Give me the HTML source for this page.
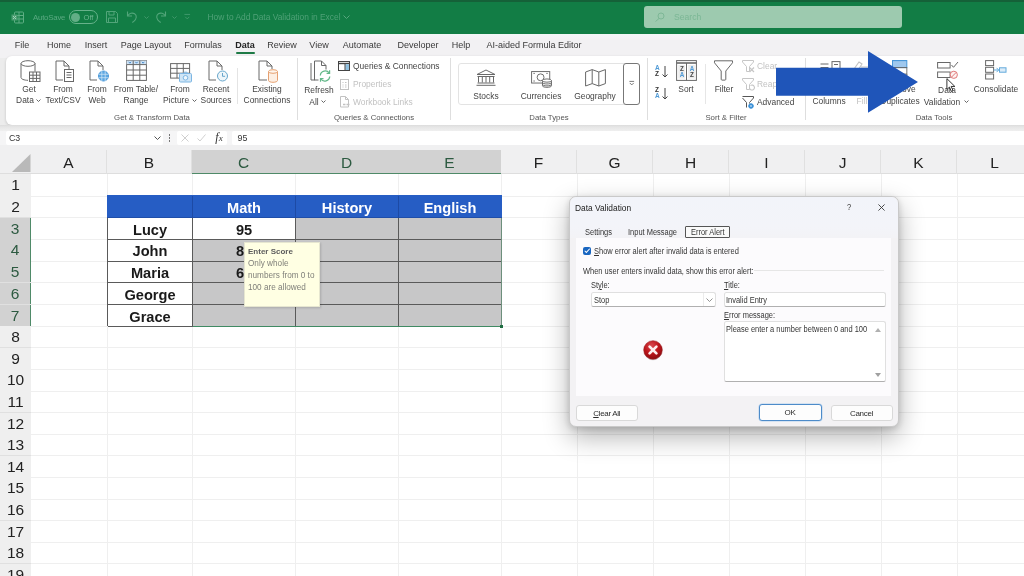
<!DOCTYPE html>
<html><head><meta charset="utf-8"><title>How to Add Data Validation in Excel</title>
<style>
*{box-sizing:border-box;margin:0;padding:0}
html,body{width:1024px;height:576px;overflow:hidden;background:#fff}
body{position:relative;font-family:"Liberation Sans",sans-serif;color:#333;font-size:9px}
.abs{position:absolute}
.t{position:absolute;white-space:nowrap;text-align:center;line-height:1}
#titlebar{left:0;top:0;width:1024px;height:33.5px;background:#127d45}
#titlebar .topline{left:0;top:0;width:1024px;height:1.5px;background:#156138}
#tabs{left:0;top:33.5px;width:1024px;height:24px;background:linear-gradient(#f1f6f5 0,#f4f2f7 3px,#f2f1f3 5px)}
#ribbonbg{left:0;top:58px;width:1024px;height:93px;background:#ececec}
#ribbon{left:5.5px;top:55.5px;width:1030px;height:69px;background:#fff;border-radius:6px;box-shadow:0 1px 3px rgba(0,0,0,.18)}
.tab{font-size:9px;color:#3a3a3a;top:40.5px}
.lbl{font-size:9px;color:#444;transform:scaleX(.935);transform-origin:50% 50%}
.lbl[style*="text-align:left"]{transform-origin:0 50%}
.dis{color:#c2c2c2}
.grp{font-size:7.8px;color:#555;top:114px}
.sep{position:absolute;width:1px;background:#dedede;top:58px;height:62px}
#fbar{left:0;top:124.5px;width:1024px;height:21px;background:linear-gradient(#dcdcdc 0,#e6e6e6 2px,#efefef 6px,#f0f0f1 7px)}
#grid{left:0;top:150px;width:1024px;height:426px;background:#fff}
.ch{position:absolute;font-size:15.5px;color:#222;text-align:center;line-height:25px;background:#efefef}
.rh{position:absolute;left:0;width:31px;height:22px;font-size:15.5px;color:#222;text-align:center;line-height:22px;background:#efefef}
.vl{position:absolute;width:1px;background:#efefef;height:403px}
.hl{position:absolute;height:1px;background:#efefef;left:31px;width:993px}
.cell{position:absolute;font-weight:bold;font-size:14.6px;text-align:center;color:#1a1a1a;white-space:nowrap}
svg{position:absolute;overflow:visible}
</style></head><body>
<div id="titlebar" class="abs"><div class="topline abs"></div></div>
<div id="tabs" class="abs"></div>
<div id="ribbonbg" class="abs"></div>
<div id="ribbon" class="abs"></div>
<div id="fbar" class="abs"></div>
<div id="grid" class="abs"></div>
<div id="gl" class="abs" style="left:0;top:0;width:1024px;height:576px;will-change:transform">
<!-- title bar contents -->
<svg style="left:11px;top:11px" width="13" height="13" viewBox="0 0 13 13" fill="none" stroke="#5fae84" stroke-width="1">
<rect x="3.5" y="1" width="9" height="11" rx="1"/><path d="M3.5 4.5h9M3.5 8h9M8 1v11"/><rect x="0.5" y="3.5" width="6" height="6" fill="#4c9f73" stroke="none"/><path d="M2 5l3 3M5 5l-3 3" stroke="#9fd0b5"/></svg>
<div class="t" style="left:33px;top:13.700px;width:32px;font-size:7.800px;letter-spacing:-0.200px;color:#5aa981">AutoSave</div>
<div class="abs" style="left:69px;top:10px;width:29px;height:14px;border:1px solid #67b28b;border-radius:7px"></div>
<div class="abs" style="left:71px;top:12.5px;width:9px;height:9px;border-radius:50%;background:#62ae86"></div>
<div class="t" style="left:82px;top:13.5px;width:13px;font-size:7.5px;color:#6cb58f">Off</div>
<svg style="left:106px;top:11px" width="12" height="12" viewBox="0 0 12 12" fill="none" stroke="#52a57a" stroke-width="1"><path d="M0.5 0.5h9l2 2v9h-11z"/><path d="M3 0.5v3.5h5v-3.5M2.5 11.500v-4.500h7v4.500"/></svg>
<svg style="left:126px;top:10px" width="13" height="13" viewBox="0 0 13 13" fill="none" stroke="#52a57a" stroke-width="1.1"><path d="M1.500 1.500v4.500h4.500"/><path d="M1.800 5.800c1.500-2.500 4.500-3.500 6.800-2 2.500 1.700 2.200 5-0.800 7.500l-1.500 1.200"/></svg>
<svg style="left:143.500px;top:15.500px" width="5" height="3.300" viewBox="0 0 6 4" fill="none" stroke="#459b6f" stroke-width="1.100"><path d="M0.500 0.500l2.500 2.500 2.500-2.500"/></svg>
<svg style="left:154px;top:10px" width="13" height="13" viewBox="0 0 13 13" fill="none" stroke="#52a57a" stroke-width="1.1"><path d="M11.500 1.500v4.500h-4.500"/><path d="M11.200 5.800c-1.500-2.500-4.500-3.500-6.800-2-2.500 1.700-2.200 5 0.800 7.500l1.500 1.200"/></svg>
<svg style="left:171.500px;top:15.500px" width="5" height="3.300" viewBox="0 0 6 4" fill="none" stroke="#459b6f" stroke-width="1.100"><path d="M0.500 0.500l2.500 2.500 2.500-2.500"/></svg>
<svg style="left:184px;top:14px" width="6.500" height="5.700" viewBox="0 0 8 7" fill="none" stroke="#459b6f" stroke-width="1.100"><path d="M0.500 0.500h7M1.500 3.500l2.500 2.500 2.500-2.500"/></svg>
<div class="t" style="left:206.500px;top:13.200px;width:135px;font-size:8.400px;color:#4fa177">How to Add Data Validation in Excel</div>
<svg style="left:343px;top:15px" width="7" height="5" viewBox="0 0 7 5" fill="none" stroke="#57a67d" stroke-width="1"><path d="M0.500 0.500l3 3 3-3"/></svg>
<div class="abs" style="left:644px;top:6px;width:258px;height:22px;border-radius:3px;background:#9dcaaf"></div>
<svg style="left:655px;top:12px" width="10" height="10" viewBox="0 0 10 10" fill="none" stroke="#7db796" stroke-width="1"><circle cx="6" cy="4" r="3"/><path d="M4 6.500l-3.500 3"/></svg>
<div class="t" style="left:674px;top:12.500px;width:27px;font-size:8.6px;color:#7bb795;text-align:left">Search</div>
<!-- tabs -->
<div class="t tab" style="left:2px;width:40px">File</div>
<div class="t tab" style="left:39px;width:40px">Home</div>
<div class="t tab" style="left:76px;width:40px">Insert</div>
<div class="t tab" style="left:116px;width:60px">Page Layout</div>
<div class="t tab" style="left:173px;width:60px">Formulas</div>
<div class="t tab" style="left:225px;width:40px;font-weight:bold;color:#222">Data</div>
<div class="abs" style="left:236px;top:51.500px;width:19px;height:2px;background:#1e7a46;border-radius:1px"></div>
<div class="t tab" style="left:252px;width:60px">Review</div>
<div class="t tab" style="left:299px;width:40px">View</div>
<div class="t tab" style="left:332px;width:60px">Automate</div>
<div class="t tab" style="left:388px;width:60px">Developer</div>
<div class="t tab" style="left:441px;width:40px">Help</div>
<div class="t tab" style="left:474px;width:120px">AI-aided Formula Editor</div>
<!-- ribbon: Get & Transform -->
<svg style="left:20px;top:60px" width="21" height="23" viewBox="0 0 21 23" fill="none" stroke="#686868" stroke-width="1">
<ellipse cx="8" cy="3.500" rx="7" ry="2.800"/><path d="M1 3.500v14c0 1.500 3 2.800 7 2.800M15 3.500v8"/>
<rect x="9.500" y="12" width="10.500" height="9.500" fill="#fff"/><path d="M9.500 15.200h10.500M9.500 18.400h10.500M13 12v9.500M16.500 12v9.500"/></svg>
<div class="t lbl" style="left:9px;top:85px;width:40px">Get</div>
<div class="t lbl" style="left:5px;top:96px;width:40px">Data</div>
<svg style="left:36px;top:99px" width="5" height="4" viewBox="0 0 5 4" fill="none" stroke="#555" stroke-width="0.900"><path d="M0.500 0.500l2 2 2-2"/></svg>

<svg style="left:55px;top:60px" width="21" height="23" viewBox="0 0 21 23" fill="none" stroke="#686868" stroke-width="1">
<path d="M1 1h8l5 5v5M1 1v19h7"/><path d="M9 1v5h5"/><rect x="9.500" y="9.500" width="9" height="12" fill="#fff"/><path d="M11.500 12.500h5M11.500 15h5M11.500 17.500h5"/></svg>
<div class="t lbl" style="left:43px;top:85px;width:40px">From</div>
<div class="t lbl" style="left:38px;top:96px;width:50px">Text/CSV</div>

<svg style="left:89px;top:60px" width="21" height="23" viewBox="0 0 21 23" fill="none" stroke="#686868" stroke-width="1">
<path d="M1 1h8l5 5v4M1 1v19h7"/><path d="M9 1v5h5"/><circle cx="14.500" cy="16" r="5" fill="#5ea8e2" stroke="#4a98d8"/><path d="M9.500 14.300h10M9.500 17.700h10M12.800 11v10M16.200 11v10" stroke="#d6e9f8" stroke-width="0.700"/></svg>
<div class="t lbl" style="left:77px;top:85px;width:40px">From</div>
<div class="t lbl" style="left:77px;top:96px;width:40px">Web</div>

<svg style="left:126px;top:60px" width="21" height="21" viewBox="0 0 21 21" fill="none" stroke="#686868" stroke-width="1">
<rect x="0.600" y="0.600" width="19.800" height="19.800"/><rect x="0.600" y="0.600" width="19.800" height="4" fill="#cfe3f5" stroke="none"/><path d="M0.600 4.600h19.800M0.600 10h19.800M0.600 15.200h19.800M7.200 0.600v19.800M13.800 0.600v19.800"/><path d="M2.700 1.800l1.200 1.400 1.200-1.400M9.300 1.800l1.200 1.400 1.200-1.400M15.900 1.800l1.200 1.400 1.200-1.400" stroke="#2f78c0" stroke-width="0.800"/></svg>
<div class="t lbl" style="left:106px;top:85px;width:60px">From Table/</div>
<div class="t lbl" style="left:106px;top:96px;width:60px">Range</div>

<svg style="left:170px;top:63px" width="23" height="21" viewBox="0 0 23 21" fill="none" stroke="#686868" stroke-width="1">
<rect x="0.600" y="0.600" width="19" height="14.500"/><path d="M0.600 5.400h19M0.600 10.200h19M7 0.600v14.500M13.300 0.600v14.500"/>
<rect x="9.500" y="10.500" width="12" height="8.500" rx="1" fill="#cfe5f6" stroke="#7db6e3"/><circle cx="15.500" cy="14.800" r="2.300" stroke="#7db6e3" fill="#eef6fc"/><path d="M13.300 10.500l0.900-1.300h2.600l0.900 1.300" stroke="#7db6e3"/></svg>
<div class="t lbl" style="left:160px;top:85px;width:40px">From</div>
<div class="t lbl" style="left:156px;top:96px;width:40px">Picture</div>
<svg style="left:192px;top:99px" width="5" height="4" viewBox="0 0 5 4" fill="none" stroke="#555" stroke-width="0.900"><path d="M0.500 0.500l2 2 2-2"/></svg>

<svg style="left:208px;top:60px" width="21" height="23" viewBox="0 0 21 23" fill="none" stroke="#686868" stroke-width="1">
<path d="M1 1h8l5 5v4M1 1v19h7"/><path d="M9 1v5h5"/><circle cx="14.500" cy="16" r="5" fill="#eef6fa" stroke="#66a6cc"/><path d="M14.500 13v3.300h2.600" stroke="#66a6cc"/></svg>
<div class="t lbl" style="left:196px;top:85px;width:40px">Recent</div>
<div class="t lbl" style="left:196px;top:96px;width:40px">Sources</div>
<div class="sep" style="left:237px;top:68px;height:36px;background:#e4e4e4"></div>

<svg style="left:258px;top:60px" width="21" height="23" viewBox="0 0 21 23" fill="none" stroke="#686868" stroke-width="1">
<path d="M1 1h8l5 5v3M1 1v19h8"/><path d="M9 1v5h5"/><path d="M10.500 11.500v9c0 1 2 1.800 4.500 1.800s4.500-0.800 4.500-1.800v-9" fill="#fdefe3" stroke="#e6a070"/><ellipse cx="15" cy="11.500" rx="4.500" ry="1.800" fill="#fef6ee" stroke="#e6a070"/></svg>
<div class="t lbl" style="left:237px;top:85px;width:60px">Existing</div>
<div class="t lbl" style="left:237px;top:96px;width:60px">Connections</div>
<div class="t grp" style="left:102px;width:100px">Get &amp; Transform Data</div>
<div class="sep" style="left:297px"></div>

<!-- Queries & Connections -->
<svg style="left:310px;top:60px" width="22" height="24" viewBox="0 0 22 24" fill="none" stroke="#686868" stroke-width="1">
<path d="M1 3v17h4"/><path d="M4.500 1h7l4.500 4.500v4M4.500 1v19h4"/><path d="M11.500 1v4.500h4.500"/>
<path d="M10.300 15.500a5 5 0 0 1 9-2.500M19.800 16.500a5 5 0 0 1-9 2.500" stroke="#62b889" stroke-width="1.200"/><path d="M19.600 10.300v3h-3M10.500 21.700v-3h3" stroke="#62b889" stroke-width="1.200"/></svg>
<div class="t lbl" style="left:299px;top:86px;width:40px">Refresh</div>
<div class="t lbl" style="left:294px;top:97.500px;width:40px">All</div>
<svg style="left:321px;top:100px" width="5" height="4" viewBox="0 0 5 4" fill="none" stroke="#555" stroke-width="0.900"><path d="M0.500 0.500l2 2 2-2"/></svg>

<svg style="left:338px;top:61px" width="12" height="10" viewBox="0 0 12 10" fill="none" stroke="#444" stroke-width="1"><rect x="0.500" y="0.500" width="11" height="9"/><path d="M0.500 2.500h11" stroke-width="1.400"/><rect x="7.300" y="3.200" width="3.700" height="5.800" fill="#8fc0e0" stroke="none"/><path d="M7 2.500v7"/></svg>
<div class="t lbl" style="left:352.500px;top:62px;text-align:left">Queries &amp; Connections</div>
<svg style="left:340px;top:79px" width="9" height="11" viewBox="0 0 9 11" fill="none" stroke="#c2c2c2" stroke-width="1"><rect x="0.500" y="0.500" width="8" height="10"/><path d="M2.500 3.500h1M2.500 6h1M2.500 8h1M5 3.500h1.500M5 6h1.500M5 8h1.500"/></svg>
<div class="t lbl dis" style="left:352.500px;top:79.500px;text-align:left">Properties</div>
<svg style="left:340px;top:96px" width="11" height="12" viewBox="0 0 11 12" fill="none" stroke="#c2c2c2" stroke-width="1"><path d="M0.500 0.500h5l3 3v7.500h-8z"/><path d="M5.500 0.500v3h3"/><path d="M3 8.500h2.500M6.500 8.500h3" stroke-width="1.500"/></svg>
<div class="t lbl dis" style="left:352.500px;top:97.500px;text-align:left">Workbook Links</div>
<div class="t grp" style="left:324px;width:100px">Queries &amp; Connections</div>
<div class="sep" style="left:450px"></div>
<!-- Data Types -->
<div class="abs" style="left:458px;top:63px;width:182px;height:42px;border:1px solid #e3e3e3;border-radius:3px;background:#fff"></div>
<div class="abs" style="left:623px;top:63px;width:17px;height:42px;border:1px solid #777;border-radius:3px;background:#fff"></div>
<svg style="left:629px;top:81px" width="5.500" height="4.700" viewBox="0 0 7 6" fill="none" stroke="#555" stroke-width="1"><path d="M0.500 0.500h6M1 2.500l2.500 2.500 2.500-2.500"/></svg>
<svg style="left:476px;top:69px" width="20" height="17" viewBox="0 0 20 17" fill="none" stroke="#686868" stroke-width="1"><path d="M1 5.500l9-4.500 9 4.500zM2.500 8v5.500M6.300 8v5.500M10 8v5.500M13.700 8v5.500M17.500 8v5.500M1.500 7.500h17M1.500 14h17M0.500 16.300h19"/></svg>
<div class="t lbl" style="left:456px;top:91.500px;width:60px">Stocks</div>
<svg style="left:530.500px;top:71px" width="22" height="17.200" viewBox="0 0 23 18" fill="none" stroke="#686868" stroke-width="1"><rect x="0.600" y="0.600" width="19" height="12"/><circle cx="10" cy="6.600" r="3.600"/><path d="M2.500 2.500h1.500M16 2.500h1.500M2.500 10.500h1.500"/><path d="M12 10v5.500c0 0.900 2 1.600 4.700 1.600s4.700-0.700 4.700-1.600v-5.500" fill="#fff"/><ellipse cx="16.700" cy="10" rx="4.700" ry="1.700" fill="#fff"/><path d="M12 12c0 0.900 2 1.600 4.700 1.600s4.700-0.700 4.700-1.600M12 14c0 0.900 2 1.600 4.700 1.600s4.700-0.700 4.700-1.600"/></svg>
<div class="t lbl" style="left:511px;top:91.500px;width:60px">Currencies</div>
<svg style="left:585px;top:69px" width="21" height="18" viewBox="0 0 21 18" fill="none" stroke="#686868" stroke-width="1"><path d="M0.600 3l6.600-2.400 6.600 2.400 6.600-2.400v14l-6.600 2.400-6.600-2.400-6.600 2.400zM7.200 0.600v14M13.800 3v14"/></svg>
<div class="t lbl" style="left:565px;top:91.500px;width:60px">Geography</div>
<div class="t grp" style="left:499px;width:100px">Data Types</div>
<div class="sep" style="left:647px"></div>

<!-- Sort & Filter -->
<div class="t" style="left:655px;top:64.500px;font-size:6.500px;font-weight:bold;color:#4f9ad6;line-height:6.500px;text-align:left">A<br><span style="color:#333">Z</span></div>
<svg style="left:661.500px;top:66px" width="6" height="12" viewBox="0 0 6 12" fill="none" stroke="#444" stroke-width="1"><path d="M3 0v11M0.500 8.500l2.500 2.500 2.500-2.500"/></svg>
<div class="t" style="left:655px;top:86.500px;font-size:6.500px;font-weight:bold;color:#333;line-height:6.500px;text-align:left">Z<br><span style="color:#4f9ad6">A</span></div>
<svg style="left:661.500px;top:88px" width="6" height="12" viewBox="0 0 6 12" fill="none" stroke="#444" stroke-width="1"><path d="M3 0v11M0.500 8.500l2.500 2.500 2.500-2.500"/></svg>
<svg style="left:676px;top:60px" width="21" height="21" viewBox="0 0 21 21" fill="none" stroke="#686868" stroke-width="1"><rect x="0.600" y="0.600" width="19.800" height="19.800"/><path d="M0.600 3h19.800" stroke-width="1.600"/><path d="M10.500 3v17.400"/><rect x="2.300" y="5" width="6.500" height="13.500" stroke="none" fill="#ececec"/><rect x="12.300" y="5" width="6.500" height="13.500" stroke="none" fill="#ececec"/></svg>
<div class="t" style="left:678.500px;top:66px;width:7px;font-size:6.300px;font-weight:bold;color:#444;line-height:6.300px">Z<br><span style="color:#4f9ad6">A</span></div>
<div class="t" style="left:688.500px;top:66px;width:7px;font-size:6.300px;font-weight:bold;color:#4f9ad6;line-height:6.300px">A<br><span style="color:#444">Z</span></div>
<div class="t lbl" style="left:666px;top:85px;width:40px">Sort</div>
<div class="sep" style="left:705px;top:64px;height:40px;background:#e6e6e6"></div>
<svg style="left:713px;top:60px" width="21" height="21" viewBox="0 0 21 21" fill="none" stroke="#686868" stroke-width="1"><path d="M1.500 0.800h18v2l-6.700 8.200v8.300c0 0.500-0.300 0.800-0.800 0.800h-3c-0.500 0-0.800-0.300-0.800-0.800v-8.300l-6.700-8.200z"/></svg>
<div class="t lbl" style="left:704px;top:85px;width:40px">Filter</div>
<svg style="left:742px;top:60px" width="13" height="13" viewBox="0 0 13 13" fill="none" stroke="#c6c6c6" stroke-width="1"><path d="M0.500 0.500h11v1.500l-4 4.500v5h-3v-5l-4-4.500z"/><path d="M7.500 7.500l4.500 4.500M12 7.500l-4.500 4.500" stroke-width="1.200"/></svg>
<div class="t lbl dis" style="left:756.500px;top:62px;text-align:left">Clear</div>
<svg style="left:742px;top:78px" width="13" height="13" viewBox="0 0 13 13" fill="none" stroke="#c6c6c6" stroke-width="1"><path d="M0.500 0.500h11v1.500l-4 4.500v5h-3v-5l-4-4.500z"/><path d="M7.500 10a2.500 2.500 0 1 0 1-2.500" stroke-width="1.100"/></svg>
<div class="t lbl dis" style="left:756.500px;top:79.500px;text-align:left">Reapply</div>
<svg style="left:742px;top:96px" width="13" height="13" viewBox="0 0 13 13" fill="none" stroke="#555" stroke-width="1"><path d="M0.500 0.500h11v1.500l-4 4.500v1M4.500 11.500v-5l-4-4.500"/><circle cx="9" cy="10" r="2.300" fill="#3a8fd6" stroke="#3a8fd6"/><circle cx="9" cy="10" r="0.800" fill="#fff" stroke="none"/></svg>
<div class="t lbl" style="left:756.500px;top:98px;text-align:left">Advanced</div>
<div class="t grp" style="left:676px;width:100px">Sort &amp; Filter</div>
<div class="sep" style="left:805px"></div>

<!-- Data Tools -->
<svg style="left:820px;top:61px" width="22" height="20" viewBox="0 0 22 20" fill="none" stroke="#686868" stroke-width="1"><path d="M0.500 3h8M0.500 6.500h8M0.500 10h8"/><rect x="12" y="0.600" width="8" height="11"/><path d="M14 3.500h4"/></svg>
<div class="t lbl" style="left:809px;top:85px;width:40px">Text to</div>
<div class="t lbl" style="left:809px;top:96.500px;width:40px">Columns</div>
<svg style="left:852px;top:61px" width="20" height="18" viewBox="0 0 20 18" fill="none" stroke="#c2c2c2" stroke-width="1.100"><path d="M2 8l5-7 3 2-4 6zM1 10l3 1M9 6h9v10h-16v-5"/></svg>
<div class="t lbl dis" style="left:842px;top:85px;width:40px">Flash</div>
<div class="t lbl dis" style="left:842px;top:96.500px;width:40px">Fill</div>
<svg style="left:892px;top:60px" width="17" height="21" viewBox="0 0 19 21" preserveAspectRatio="none" fill="none" stroke="#686868" stroke-width="1"><rect x="0.600" y="0.600" width="16" height="7" fill="#9fc8ee" stroke="#3a8fd6"/><rect x="0.600" y="7.600" width="16" height="6.500"/><path d="M0.600 14v5.500h16v-5.500"/></svg>
<div class="t lbl" style="left:875px;top:85px;width:50px">Remove</div>
<div class="t lbl" style="left:875px;top:96.500px;width:50px">Duplicates</div>
<svg style="left:937px;top:61px" width="22" height="20" viewBox="0 0 22 20" fill="none" stroke="#686868" stroke-width="1"><rect x="0.600" y="1.500" width="12.500" height="5.500"/><rect x="0.600" y="11" width="12.500" height="5.500"/><path d="M14.500 4l2 2.300 4.500-5.300" stroke-width="1"/><circle cx="16.800" cy="13.800" r="3.600" stroke="#e07878" fill="#fdf1f0"/><path d="M14.300 16.300l5-5" stroke="#e07878"/></svg>
<div class="t lbl" style="left:927px;top:86px;width:40px">Data</div>
<div class="t lbl" style="left:917px;top:97.500px;width:50px">Validation</div>
<svg style="left:963.500px;top:100px" width="5" height="4" viewBox="0 0 5 4" fill="none" stroke="#555" stroke-width="0.900"><path d="M0.500 0.500l2 2 2-2"/></svg>
<svg style="left:985px;top:60px" width="22" height="20" viewBox="0 0 22 20" fill="none" stroke="#686868" stroke-width="1"><rect x="0.600" y="0.600" width="8" height="5"/><rect x="0.600" y="7.300" width="8" height="5"/><rect x="0.600" y="14" width="8" height="5"/><path d="M8.600 10h5M11.500 7.800l2.200 2.200-2.200 2.200" stroke="#62aadc"/><rect x="14.500" y="7.800" width="6.500" height="4.400" fill="#dcecf8" stroke="#62aadc"/></svg>
<div class="t lbl" style="left:966px;top:85px;width:60px">Consolidate</div>
<div class="t grp" style="left:884px;width:100px">Data Tools</div>
<!-- formula bar -->
<div class="abs" style="left:0;top:131px;width:1024px;height:14px;background:#f5f5f6"></div>
<div class="abs" style="left:6px;top:131px;width:157px;height:14px;background:#fff;border-radius:2px"></div>
<div class="t" style="left:9px;top:134px;font-size:8.8px;color:#333;text-align:left">C3</div>
<svg style="left:153.50px;top:136px" width="7" height="5" viewBox="0 0 7 5" fill="none" stroke="#555" stroke-width="1"><path d="M0.50 0.50l3 3 3-3"/></svg>
<div class="abs" style="left:168.50px;top:134px;width:1.50px;height:1.50px;background:#777;box-shadow:0 3px 0 #777,0 6px 0 #777"></div>
<div class="abs" style="left:177px;top:131px;width:50px;height:14px;background:#fff;border-radius:2px"></div>
<svg style="left:181px;top:134px" width="8" height="8" viewBox="0 0 8 8" fill="none" stroke="#c9c9c9" stroke-width="0.90"><path d="M0.50 0.50l7 7M7.50 0.50l-7 7"/></svg>
<svg style="left:197px;top:134px" width="9" height="8" viewBox="0 0 9 8" fill="none" stroke="#c9c9c9" stroke-width="0.90"><path d="M0.50 4.50l2.50 2.50 5.50-6.50"/></svg>
<div class="t" style="left:212.50px;top:131px;width:13px;font-family:'Liberation Serif',serif;font-style:italic;font-size:12px;color:#333">f<span style="font-size:9px">x</span></div>
<div class="abs" style="left:231.50px;top:131px;width:800px;height:14px;background:#fff;border-radius:2px"></div>
<div class="t" style="left:237.50px;top:134px;font-size:8.80px;color:#333;text-align:left">95</div>
<!-- grid -->
<div class="abs" style="left:0;top:145.0px;width:1024px;height:29.30px;background:#f0f0f1;border-bottom:1px solid #dedede"></div>
<div class="ch" style="left:31px;width:76px;top:150.0px;height:24.30px;line-height:26.80px;border-right:1px solid #e0e0e0;background:none;">A</div>
<div class="ch" style="left:107px;width:85px;top:150.0px;height:24.30px;line-height:26.80px;border-right:1px solid #e0e0e0;background:none;">B</div>
<div class="ch" style="left:192px;width:103px;top:150.0px;height:24.30px;line-height:26.80px;background:#d2d2d2;color:#2d5a41;border-bottom:1px solid #4f8a68;">C</div>
<div class="ch" style="left:295px;width:103px;top:150.0px;height:24.30px;line-height:26.80px;background:#d2d2d2;color:#2d5a41;border-bottom:1px solid #4f8a68;">D</div>
<div class="ch" style="left:398px;width:103px;top:150.0px;height:24.30px;line-height:26.80px;background:#d2d2d2;color:#2d5a41;border-bottom:1px solid #4f8a68;">E</div>
<div class="ch" style="left:501px;width:76px;top:150.0px;height:24.30px;line-height:26.80px;border-right:1px solid #e0e0e0;background:none;">F</div>
<div class="ch" style="left:577px;width:76px;top:150.0px;height:24.30px;line-height:26.80px;border-right:1px solid #e0e0e0;background:none;">G</div>
<div class="ch" style="left:653px;width:76px;top:150.0px;height:24.30px;line-height:26.80px;border-right:1px solid #e0e0e0;background:none;">H</div>
<div class="ch" style="left:729px;width:76px;top:150.0px;height:24.30px;line-height:26.80px;border-right:1px solid #e0e0e0;background:none;">I</div>
<div class="ch" style="left:805px;width:76px;top:150.0px;height:24.30px;line-height:26.80px;border-right:1px solid #e0e0e0;background:none;">J</div>
<div class="ch" style="left:881px;width:76px;top:150.0px;height:24.30px;line-height:26.80px;border-right:1px solid #e0e0e0;background:none;">K</div>
<div class="ch" style="left:957px;width:76px;top:150.0px;height:24.30px;line-height:26.80px;border-right:1px solid #e0e0e0;background:none;">L</div>
<svg style="left:12px;top:154px" width="19" height="18" viewBox="0 0 19 18"><path d="M18.50 0v18h-18.50z" fill="#b9b9b9"/></svg>
<div class="rh" style="top:174.30px;height:21.70px;line-height:21.50px;">1</div>
<div class="abs" style="left:0;top:195.50px;width:31px;height:1px;background:#e0e0e0"></div>
<div class="rh" style="top:196.00px;height:21.70px;line-height:21.50px;">2</div>
<div class="abs" style="left:0;top:217.20px;width:31px;height:1px;background:#e0e0e0"></div>
<div class="rh" style="top:217.70px;height:21.70px;line-height:21.50px;background:#d2d2d2;color:#2d5a41;border-right:1px solid #4f8a68;">3</div>
<div class="abs" style="left:0;top:238.90px;width:31px;height:1px;background:#e0e0e0"></div>
<div class="rh" style="top:239.40px;height:21.70px;line-height:21.50px;background:#d2d2d2;color:#2d5a41;border-right:1px solid #4f8a68;">4</div>
<div class="abs" style="left:0;top:260.60px;width:31px;height:1px;background:#e0e0e0"></div>
<div class="rh" style="top:261.10px;height:21.70px;line-height:21.50px;background:#d2d2d2;color:#2d5a41;border-right:1px solid #4f8a68;">5</div>
<div class="abs" style="left:0;top:282.30px;width:31px;height:1px;background:#e0e0e0"></div>
<div class="rh" style="top:282.80px;height:21.70px;line-height:21.50px;background:#d2d2d2;color:#2d5a41;border-right:1px solid #4f8a68;">6</div>
<div class="abs" style="left:0;top:304.00px;width:31px;height:1px;background:#e0e0e0"></div>
<div class="rh" style="top:304.50px;height:21.70px;line-height:21.50px;background:#d2d2d2;color:#2d5a41;border-right:1px solid #4f8a68;">7</div>
<div class="abs" style="left:0;top:325.70px;width:31px;height:1px;background:#e0e0e0"></div>
<div class="rh" style="top:326.20px;height:21.60px;line-height:21.40px;">8</div>
<div class="abs" style="left:0;top:347.30px;width:31px;height:1px;background:#e0e0e0"></div>
<div class="rh" style="top:347.80px;height:21.60px;line-height:21.40px;">9</div>
<div class="abs" style="left:0;top:368.90px;width:31px;height:1px;background:#e0e0e0"></div>
<div class="rh" style="top:369.40px;height:21.60px;line-height:21.40px;">10</div>
<div class="abs" style="left:0;top:390.50px;width:31px;height:1px;background:#e0e0e0"></div>
<div class="rh" style="top:391.00px;height:21.60px;line-height:21.40px;">11</div>
<div class="abs" style="left:0;top:412.10px;width:31px;height:1px;background:#e0e0e0"></div>
<div class="rh" style="top:412.60px;height:21.60px;line-height:21.40px;">12</div>
<div class="abs" style="left:0;top:433.70px;width:31px;height:1px;background:#e0e0e0"></div>
<div class="rh" style="top:434.20px;height:21.60px;line-height:21.40px;">13</div>
<div class="abs" style="left:0;top:455.30px;width:31px;height:1px;background:#e0e0e0"></div>
<div class="rh" style="top:455.80px;height:21.60px;line-height:21.40px;">14</div>
<div class="abs" style="left:0;top:476.90px;width:31px;height:1px;background:#e0e0e0"></div>
<div class="rh" style="top:477.40px;height:21.60px;line-height:21.40px;">15</div>
<div class="abs" style="left:0;top:498.50px;width:31px;height:1px;background:#e0e0e0"></div>
<div class="rh" style="top:499.00px;height:21.60px;line-height:21.40px;">16</div>
<div class="abs" style="left:0;top:520.10px;width:31px;height:1px;background:#e0e0e0"></div>
<div class="rh" style="top:520.60px;height:21.60px;line-height:21.40px;">17</div>
<div class="abs" style="left:0;top:541.70px;width:31px;height:1px;background:#e0e0e0"></div>
<div class="rh" style="top:542.20px;height:21.60px;line-height:21.40px;">18</div>
<div class="abs" style="left:0;top:563.30px;width:31px;height:1px;background:#e0e0e0"></div>
<div class="rh" style="top:563.80px;height:21.60px;line-height:21.40px;">19</div>
<div class="abs" style="left:0;top:584.90px;width:31px;height:1px;background:#e0e0e0"></div>
<div class="vl" style="left:106.5px;top:174.3px"></div>
<div class="vl" style="left:191.5px;top:174.3px"></div>
<div class="vl" style="left:294.5px;top:174.3px"></div>
<div class="vl" style="left:397.5px;top:174.3px"></div>
<div class="vl" style="left:500.5px;top:174.3px"></div>
<div class="vl" style="left:576.5px;top:174.3px"></div>
<div class="vl" style="left:652.5px;top:174.3px"></div>
<div class="vl" style="left:728.5px;top:174.3px"></div>
<div class="vl" style="left:804.5px;top:174.3px"></div>
<div class="vl" style="left:880.5px;top:174.3px"></div>
<div class="vl" style="left:956.5px;top:174.3px"></div>
<div class="vl" style="left:1032.5px;top:174.3px"></div>
<div class="hl" style="top:195.50px"></div>
<div class="hl" style="top:217.20px"></div>
<div class="hl" style="top:238.90px"></div>
<div class="hl" style="top:260.60px"></div>
<div class="hl" style="top:282.30px"></div>
<div class="hl" style="top:304.00px"></div>
<div class="hl" style="top:325.70px"></div>
<div class="hl" style="top:347.30px"></div>
<div class="hl" style="top:368.90px"></div>
<div class="hl" style="top:390.50px"></div>
<div class="hl" style="top:412.10px"></div>
<div class="hl" style="top:433.70px"></div>
<div class="hl" style="top:455.30px"></div>
<div class="hl" style="top:476.90px"></div>
<div class="hl" style="top:498.50px"></div>
<div class="hl" style="top:520.10px"></div>
<div class="hl" style="top:541.70px"></div>
<div class="hl" style="top:563.30px"></div>
<div class="hl" style="top:584.90px"></div>
<!-- table -->
<div class="abs" style="left:192.5px;top:217.70px;width:309.0px;height:108.5px;background:#c7c7c8"></div>
<div class="abs" style="left:192.5px;top:217.70px;width:103.0px;height:21.7px;background:#fff"></div>
<div class="abs" style="left:107.5px;top:217.70px;width:85.0px;height:108.5px;background:#fff"></div>
<div class="abs" style="left:107.0px;top:195.30px;width:394.5px;height:23.10px;background:#265dc4;border-bottom:1px solid #1f4ea9"></div>
<div class="abs" style="left:107.5px;top:238.90px;width:394.0px;height:1px;background:#5a5a5a"></div>
<div class="abs" style="left:107.5px;top:260.60px;width:394.0px;height:1px;background:#5a5a5a"></div>
<div class="abs" style="left:107.5px;top:282.30px;width:394.0px;height:1px;background:#5a5a5a"></div>
<div class="abs" style="left:107.5px;top:304.00px;width:394.0px;height:1px;background:#5a5a5a"></div>
<div class="abs" style="left:107.5px;top:325.70px;width:394.0px;height:1px;background:#5a5a5a"></div>
<div class="abs" style="left:107.0px;top:218.40px;width:1px;height:107.80px;background:#5a5a5a"></div>
<div class="abs" style="left:192.0px;top:218.40px;width:1px;height:107.80px;background:#5a5a5a"></div>
<div class="abs" style="left:295.0px;top:218.40px;width:1px;height:107.80px;background:#5a5a5a"></div>
<div class="abs" style="left:398.0px;top:218.40px;width:1px;height:107.80px;background:#5a5a5a"></div>
<div class="abs" style="left:501.0px;top:218.40px;width:1px;height:107.80px;background:#5a5a5a"></div>
<div class="abs" style="left:192.0px;top:196.0px;width:1px;height:21.7px;background:#1d4aa5"></div>
<div class="abs" style="left:295.0px;top:196.0px;width:1px;height:21.7px;background:#1d4aa5"></div>
<div class="abs" style="left:398.0px;top:196.0px;width:1px;height:21.7px;background:#1d4aa5"></div>
<div class="abs" style="left:192.5px;top:325.70px;width:309.0px;height:1px;background:#3f8a63"></div>
<div class="abs" style="left:501.0px;top:217.70px;width:1px;height:108.5px;background:#6d8f7c"></div>
<div class="abs" style="left:500.0px;top:324.70px;width:3px;height:3px;background:#1f6e43"></div>
<div class="cell" style="left:192.5px;width:103.0px;top:196.00px;height:21.7px;line-height:24.6px;color:#fff">Math</div>
<div class="cell" style="left:295.5px;width:103.0px;top:196.00px;height:21.7px;line-height:24.6px;color:#fff">History</div>
<div class="cell" style="left:398.5px;width:103.0px;top:196.00px;height:21.7px;line-height:24.6px;color:#fff">English</div>
<div class="cell" style="left:107.5px;width:85.0px;top:217.70px;height:21.7px;line-height:24.6px;color:#1a1a1a">Lucy</div>
<div class="cell" style="left:107.5px;width:85.0px;top:239.40px;height:21.7px;line-height:24.6px;color:#1a1a1a">John</div>
<div class="cell" style="left:107.5px;width:85.0px;top:261.10px;height:21.7px;line-height:24.6px;color:#1a1a1a">Maria</div>
<div class="cell" style="left:107.5px;width:85.0px;top:282.80px;height:21.7px;line-height:24.6px;color:#1a1a1a">George</div>
<div class="cell" style="left:107.5px;width:85.0px;top:304.50px;height:21.7px;line-height:24.6px;color:#1a1a1a">Grace</div>
<div class="cell" style="left:192.5px;width:103.0px;top:217.70px;height:21.7px;line-height:24.6px;color:#1a1a1a">95</div>
<div class="cell" style="left:192.5px;width:103.0px;top:239.40px;height:21.7px;line-height:24.6px;color:#1a1a1a">85</div>
<div class="cell" style="left:192.5px;width:103.0px;top:261.10px;height:21.7px;line-height:24.6px;color:#1a1a1a">65</div>
<!-- tooltip -->
<div class="abs" style="left:243.50px;top:242px;width:76.50px;height:65px;background:#ffffe3;border:1px solid #e6e6d0;box-shadow:1px 1px 2px rgba(0,0,0,.15)"></div>
<div class="t" style="left:248px;top:248px;font-size:8px;font-weight:bold;color:#5d5d5d;text-align:left">Enter Score</div>
<div class="t" style="left:248px;top:258px;font-size:8.20px;color:#80807a;text-align:left;line-height:11.80px">Only whole<br>numbers from 0 to<br>100 are allowed</div>
<!-- dialog -->
<style>
#dlg{left:569px;top:196px;width:330px;height:231px;background:#f3f2f4;border-radius:7px;border:1px solid #c9c9c9;box-shadow:0 10px 26px rgba(0,0,0,.30),0 2px 7px rgba(0,0,0,.16)}
#dlg .d{position:absolute;white-space:nowrap;line-height:1;font-size:8.3px;color:#353535;transform:scaleX(.9);transform-origin:0 50%}
#dlg .box{position:absolute;background:#fff;border:1px solid #e0e0e0;border-bottom-color:#b0b0b0;border-radius:2.500px}
#dlg .btn{position:absolute;background:#fdfdfd;border:1px solid #d9d9d9;border-radius:3px;font-size:8px;color:#2b2b2b;text-align:center;line-height:14px;letter-spacing:-0.3px}
#dlg u{text-decoration-thickness:0.600px;text-underline-offset:1px}
</style>
<div id="dlg" class="abs">
<div class="abs" style="left:0;top:0;width:328px;height:41px;background:linear-gradient(#f2f4fa 0,#f3f4f9 30px,#f3f3f6 41px);border-radius:7px 7px 0 0"></div>
<div class="d" style="left:5px;top:6.800px;font-size:9.300px;color:#222">Data Validation</div>
<div class="d" style="left:276.500px;top:5.500px;font-size:8.500px;color:#444">?</div>
<svg style="left:308px;top:7px" width="7" height="7" viewBox="0 0 8 8" fill="none" stroke="#333" stroke-width="1"><path d="M0.500 0.500l7 7M7.500 0.500l-7 7"/></svg>
<div class="d" style="left:15px;top:30.500px">Settings</div>
<div class="d" style="left:58px;top:30.500px">Input Message</div>
<div class="abs" style="left:115px;top:28.500px;width:45px;height:12px;border:1px solid #555;border-radius:1px;background:#fafafa"></div>
<div class="d" style="left:121px;top:30.500px">Error Alert</div>
<div class="abs" style="left:6px;top:40.500px;width:315px;height:158.500px;background:#fcfbfd"></div>
<div class="abs" style="left:12.500px;top:49.500px;width:8.800px;height:8.800px;background:#1966c0;border-radius:2px"></div>
<svg style="left:13.500px;top:51.200px" width="6.500" height="5.500" viewBox="0 0 7 6" fill="none" stroke="#fff" stroke-width="1.100"><path d="M0.700 3l1.800 1.800 3.700-4"/></svg>
<div class="d" style="left:24px;top:50px"><u>S</u>how error alert after invalid data is entered</div>
<div class="d" style="left:12.500px;top:69.500px">When user enters invalid data, show this error alert:</div>
<div class="abs" style="left:184px;top:73px;width:130px;height:1px;background:#e6e6e6"></div>
<div class="d" style="left:20.500px;top:84px">St<u>y</u>le:</div>
<div class="box" style="left:20.500px;top:94.500px;width:125px;height:15.500px"></div>
<div class="d" style="left:23.500px;top:98.500px">Stop</div>
<div class="abs" style="left:132.500px;top:96px;width:1px;height:12.500px;background:#ececec"></div>
<svg style="left:136px;top:100.500px" width="7" height="5" viewBox="0 0 7 5" fill="none" stroke="#777" stroke-width="0.800"><path d="M0.500 0.500l3 3 3-3"/></svg>
<div class="d" style="left:153.500px;top:84px"><u>T</u>itle:</div>
<div class="box" style="left:153.500px;top:94.500px;width:162.500px;height:15.500px"></div>
<div class="d" style="left:156px;top:98.500px">Invalid Entry</div>
<div class="d" style="left:153.500px;top:114px"><u>E</u>rror message:</div>
<div class="box" style="left:153.500px;top:123.500px;width:162.500px;height:61.500px"></div>
<div class="d" style="left:156px;top:128px">Please enter a number between 0 and 100</div>
<svg style="left:305px;top:131px" width="6" height="4" viewBox="0 0 6 4"><path d="M0 4l3-4 3 4z" fill="#b0b0b0"/></svg>
<svg style="left:305px;top:175.500px" width="6" height="4" viewBox="0 0 6 4"><path d="M0 0l3 4 3-4z" fill="#a0a0a0"/></svg>
<!-- stop icon -->
<svg style="left:72.700px;top:143.300px" width="20" height="20" viewBox="0 0 20 20"><defs><radialGradient id="rg" cx="42%" cy="28%" r="78%"><stop offset="0" stop-color="#d94a50"/><stop offset="0.500" stop-color="#bd151b"/><stop offset="1" stop-color="#84090e"/></radialGradient></defs><ellipse cx="10" cy="11" rx="9" ry="9.300" fill="#cfcfd2"/><circle cx="10" cy="10" r="9.300" fill="url(#rg)" stroke="#9a2024" stroke-width="0.600"/><path d="M6.600 6.600l6.800 6.800M13.400 6.600l-6.800 6.800" stroke="#fdeeee" stroke-width="2.700" stroke-linecap="round"/></svg>
<div class="btn" style="left:6px;top:207.500px;width:61.500px;height:16.500px;line-height:15px"><u>C</u>lear All</div>
<div class="btn" style="left:188.500px;top:207px;width:63px;height:17px;border:1px solid #4d8bc9;line-height:15px;box-shadow:0 0 0 0.500px #b5d2ee">OK</div>
<div class="btn" style="left:260.500px;top:207.500px;width:62px;height:16.500px;line-height:15px">Cancel</div>
</div>
<!-- arrow + cursor -->
<svg style="left:776px;top:51.300px" width="143" height="61.700" viewBox="0 0 143 61.700"><path d="M0 16.700h92v-16.700l50 31-50 30.700v-16.900h-92z" fill="#1f55b9"/></svg>
<svg style="left:945.500px;top:77.500px" width="10" height="14.500" viewBox="0 0 11 17"><path d="M0.700 0.700v12.800l3-2.800 2.200 5 2-0.900-2.200-4.900h4.300z" fill="#fff" stroke="#111" stroke-width="1" stroke-linejoin="round"/></svg>
</div>
</body></html>
